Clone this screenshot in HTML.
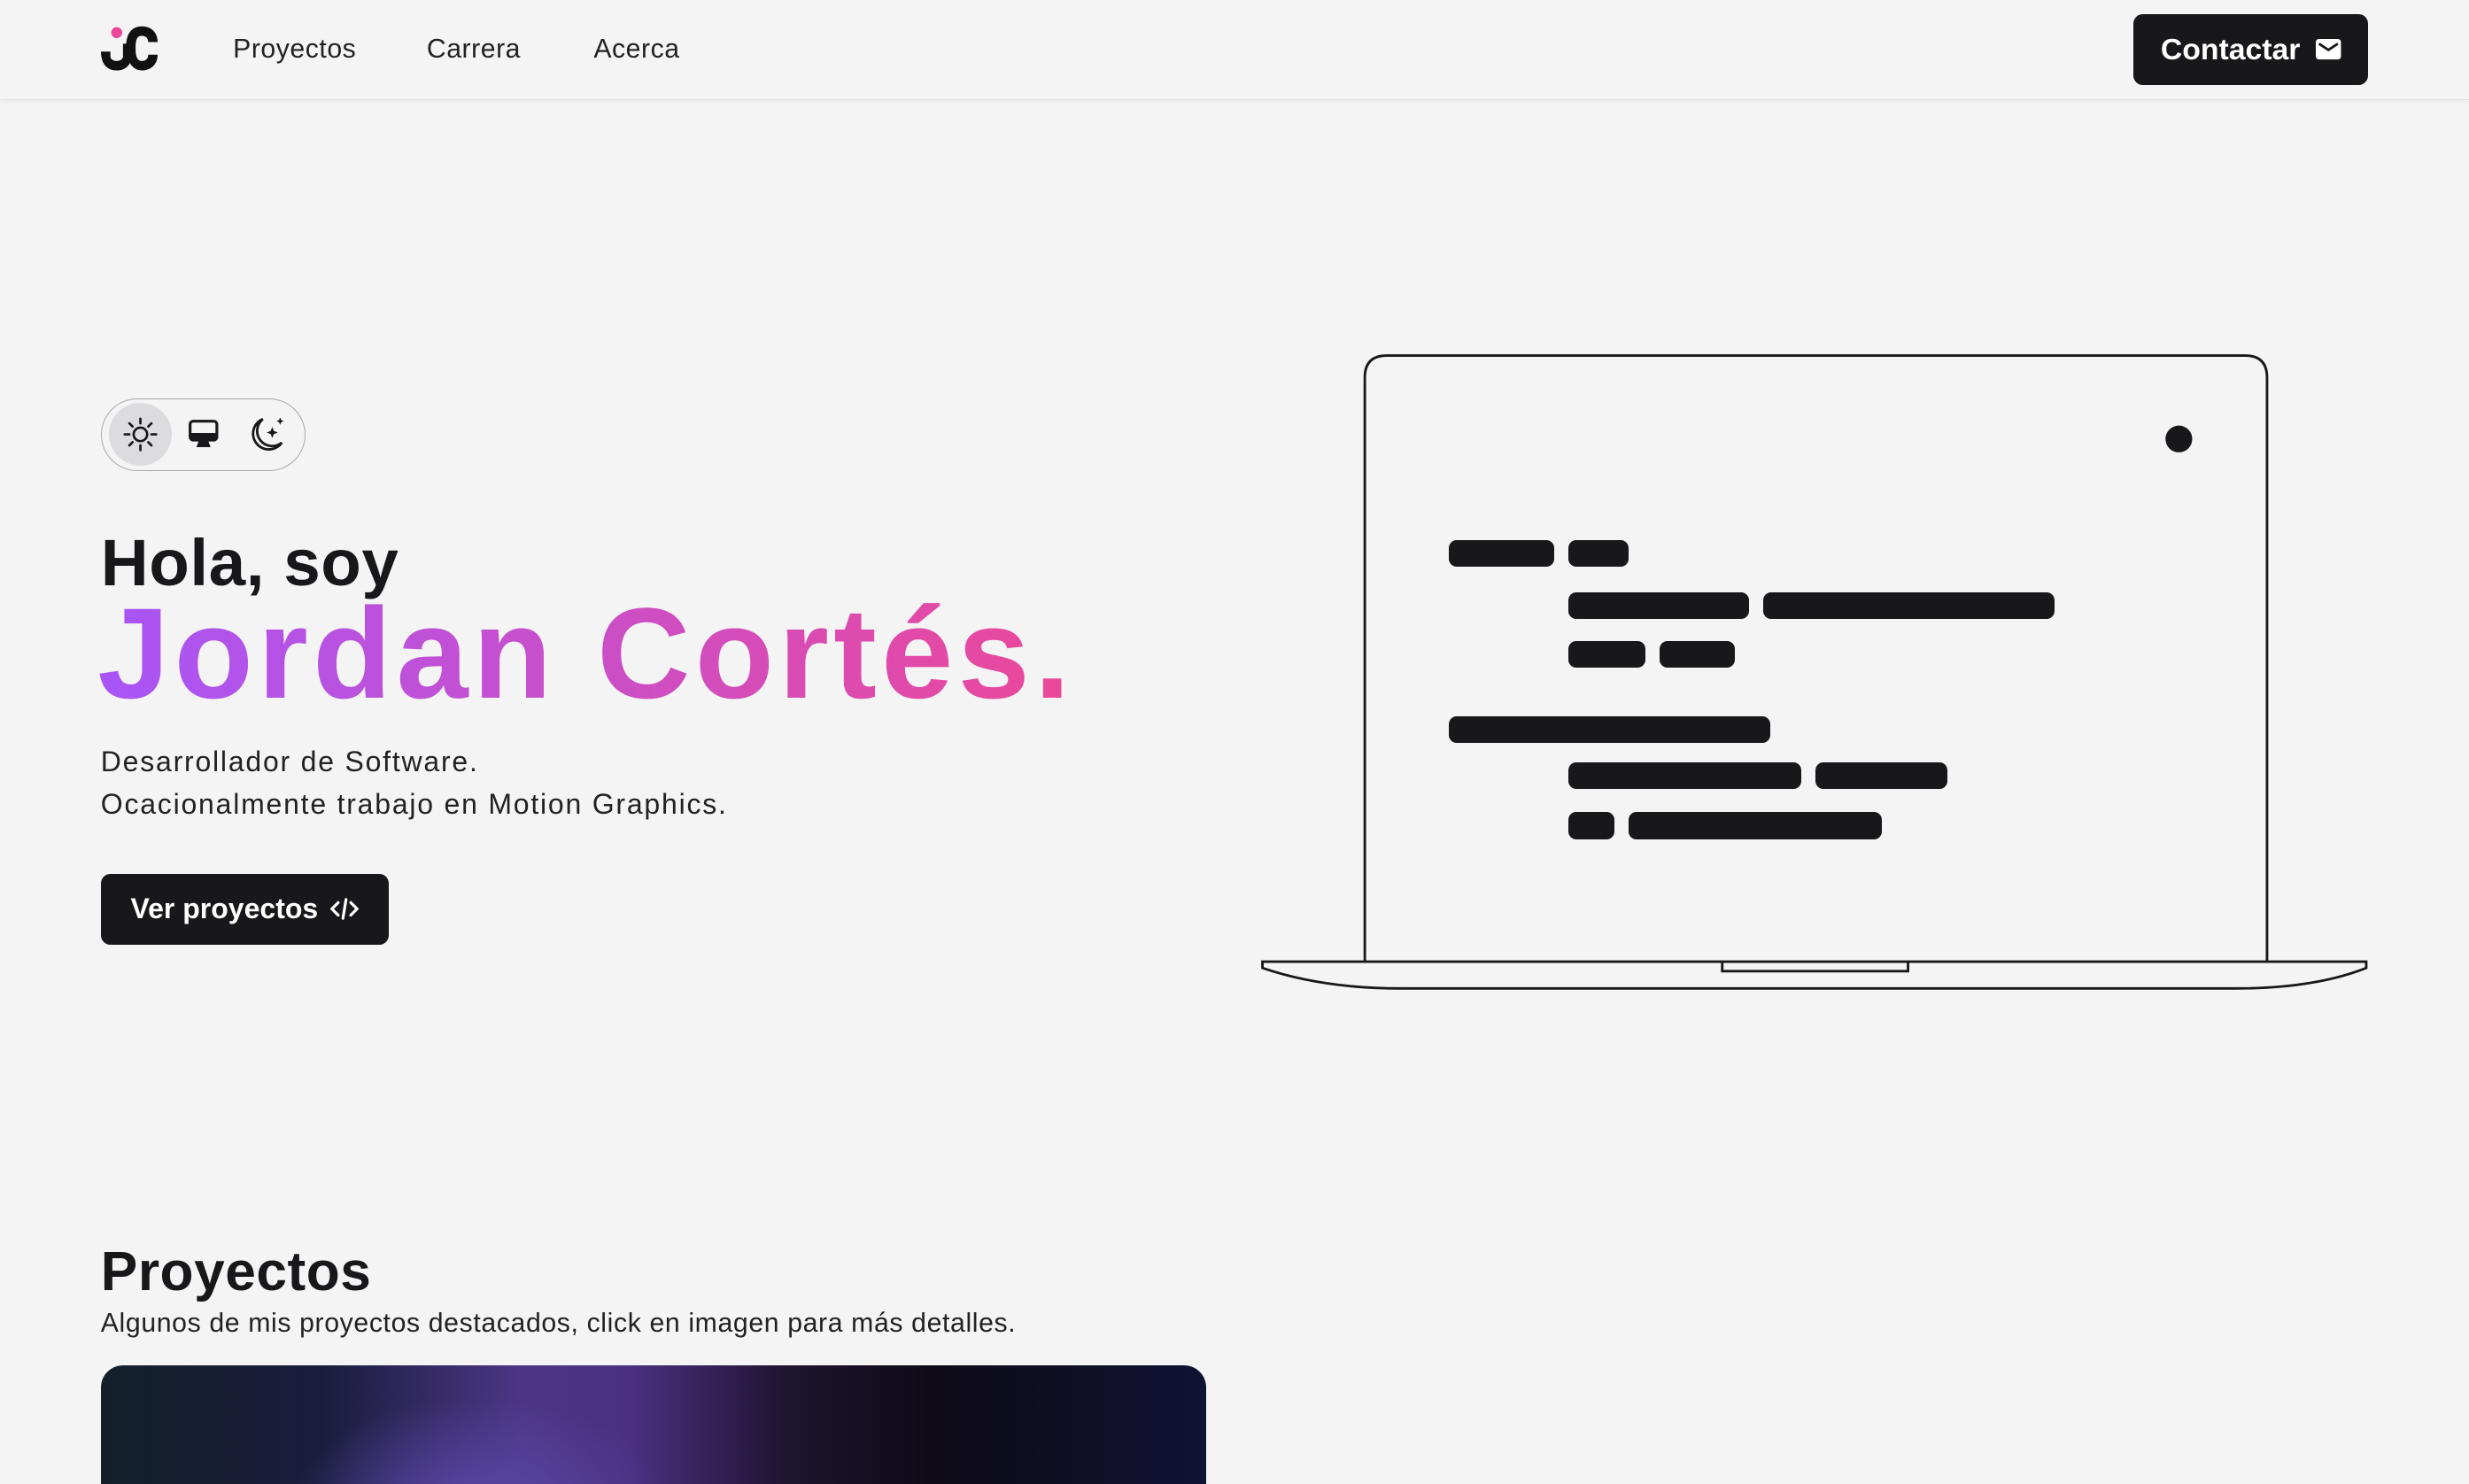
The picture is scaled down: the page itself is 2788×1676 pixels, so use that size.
<!DOCTYPE html>
<html><head><meta charset="utf-8">
<style>
html,body{margin:0;padding:0;background:#f4f4f4;}
html{height:1676px;overflow:hidden;}
body{width:1568px;height:942px;zoom:1.77806;overflow:hidden;position:relative;font-family:"Liberation Sans",sans-serif;color:#18181b;}
.a{position:absolute;}
nav{position:absolute;left:0;top:0;width:1568px;height:63px;border-bottom:1px solid #e2e2e2;box-shadow:0 1px 3px rgba(0,0,0,.06);}
.nl{position:absolute;top:22px;font-size:17px;color:#222;letter-spacing:0.3px;}
.btn{position:absolute;background:#18181b;color:#fff;border-radius:6px;font-weight:bold;display:flex;align-items:center;justify-content:center;gap:10px;}
.bar{position:absolute;height:17px;background:#18181b;border-radius:5px;}
</style></head><body>
<nav>
<svg class="a" style="left:64px;top:16px" width="36" height="30" viewBox="0 0 36 30">
<circle cx="10" cy="5" r="3.5" fill="#ec4899"/>
<path d="M6 17 H0 C0 25 4 29 10 29 C16 29 20 25 20 17 V12 H14 V20 C14 22 12 23 10 23 C8 23 6 22 6 20 Z" fill="#111"/>
<path d="M36 11 C36 5 32 1 26 1 C20 1 16 5 16 14 C16 23 20 29 26 29 C32 29 36 25 36 19 H30 C30 22 28 23 26 23 C23 23 22 20 22 15 C22 9 23 7 26 7 C28 7 30 8 30 11 Z" fill="#111"/>
</svg>
<div class="nl" style="left:148px">Proyectos</div>
<div class="nl" style="left:271px">Carrera</div>
<div class="nl" style="left:377px">Acerca</div>
<div class="btn" style="left:1355px;top:9px;width:149px;height:45px;font-size:19px;">Contactar
<svg width="16" height="13" viewBox="0 0 16 13"><rect x="0" y="0" width="16" height="13" rx="2" fill="#fff"/><path d="M2 3 L8 7 L14 3" stroke="#18181b" stroke-width="1.6" fill="none"/></svg></div>
</nav>

<div class="a" style="left:64px;top:253px;width:129px;height:45px;border:1px solid #a8a8a8;border-radius:24px;"></div>
<div class="a" style="left:69px;top:256px;width:40px;height:40px;border-radius:50%;background:#dcdcdf;"></div>
<svg class="a" style="left:78px;top:265px" width="22" height="22" viewBox="0 0 22 22" stroke="#18181b" stroke-width="1.5" fill="none" stroke-linecap="round">
<circle cx="11" cy="11" r="4.3"/><path d="M11 1v3M11 18v3M1 11h3M18 11h3M4 4l2 2M16 16l2 2M4 18l2-2M16 6l2-2"/></svg>
<svg class="a" style="left:119px;top:266px" width="20" height="20" viewBox="0 0 20 20"><rect x="1.5" y="1.5" width="17" height="12" rx="2" fill="none" stroke="#18181b" stroke-width="1.8"/><rect x="1.5" y="9" width="17" height="4.5" fill="#18181b"/><path d="M7 14h6l1.5 4h-9z" fill="#18181b"/></svg>
<svg class="a" style="left:157px;top:263px" width="26" height="26" viewBox="0 0 26 26"><path d="M10 3 A10 10 0 1 0 22 18 A8.5 8.5 0 0 1 10 3 Z" fill="none" stroke="#18181b" stroke-width="1.6"/><path d="M16 8 l1 2.5 2.5 1 -2.5 1 -1 2.5 -1 -2.5 -2.5 -1 2.5 -1z M21 2 l.7 1.6 1.6.7 -1.6.7 -.7 1.6 -.7 -1.6 -1.6 -.7 1.6 -.7z" fill="#18181b"/></svg>

<div class="a" style="left:64px;top:333px;font-size:42px;font-weight:bold;letter-spacing:0.3px;">Hola, soy</div>
<div class="a" style="left:62px;top:368px;font-size:82px;font-weight:bold;letter-spacing:3px;background:linear-gradient(90deg,#a855f7,#ec4899);-webkit-background-clip:text;background-clip:text;color:transparent;white-space:nowrap;">Jordan Cortés.</div>
<div class="a" style="left:64px;top:470px;font-size:18px;line-height:27px;color:#222;letter-spacing:1px;">Desarrollador de Software.<br>Ocacionalmente trabajo en Motion Graphics.</div>
<div class="btn" style="left:64px;top:555px;width:183px;height:45px;font-size:18px;gap:8px;">Ver proyectos
<svg width="18" height="14" viewBox="0 0 18 14" stroke="#fff" stroke-width="1.8" fill="none" stroke-linecap="round"><path d="M5 3L1 7l4 4M13 3l4 4-4 4M10 1L8 13"/></svg></div>

<svg class="a" style="left:800px;top:224px" width="706" height="408" viewBox="800 224 706 408" fill="none" stroke="#18181b" stroke-width="1.6">
<path d="M867 611 V240 Q867 226 881 226 H1426 Q1440 226 1440 240 V611"/>
<path d="M802 611 H1503 V615 Q1470 628 1420 628 H890 Q840 628 802 615 Z"/>
<path d="M1094 611 V617 H1212 V611"/>
<circle cx="1384" cy="279" r="8.5" fill="#18181b" stroke="none"/>
</svg>
<div class="bar" style="left:920px;top:343px;width:67px"></div>
<div class="bar" style="left:996px;top:343px;width:38px"></div>
<div class="bar" style="left:996px;top:376px;width:115px"></div>
<div class="bar" style="left:1120px;top:376px;width:185px"></div>
<div class="bar" style="left:996px;top:407px;width:49px"></div>
<div class="bar" style="left:1054px;top:407px;width:48px"></div>
<div class="bar" style="left:920px;top:455px;width:204px"></div>
<div class="bar" style="left:996px;top:484px;width:148px"></div>
<div class="bar" style="left:1153px;top:484px;width:84px"></div>
<div class="bar" style="left:996px;top:516px;width:29px"></div>
<div class="bar" style="left:1034px;top:516px;width:161px"></div>

<div class="a" style="left:64px;top:788px;font-size:35px;font-weight:bold;letter-spacing:0.3px;">Proyectos</div>
<div class="a" style="left:64px;top:831px;font-size:17px;color:#222;letter-spacing:0.35px;">Algunos de mis proyectos destacados, click en imagen para más detalles.</div>
<div class="a" style="left:64px;top:867px;width:702px;height:76px;border-radius:14px 14px 0 0;overflow:hidden;background:linear-gradient(90deg,#13202a 0%,#1a1d3d 20%,#4b3685 38%,#4a3080 48%,#1e1430 62%,#0e0b16 75%,#101234 100%);">
<div style="position:absolute;left:120px;top:20px;width:240px;height:140px;border-radius:50%;background:radial-gradient(#5a48a8,rgba(90,72,168,0) 70%);"></div></div>
</body></html>
